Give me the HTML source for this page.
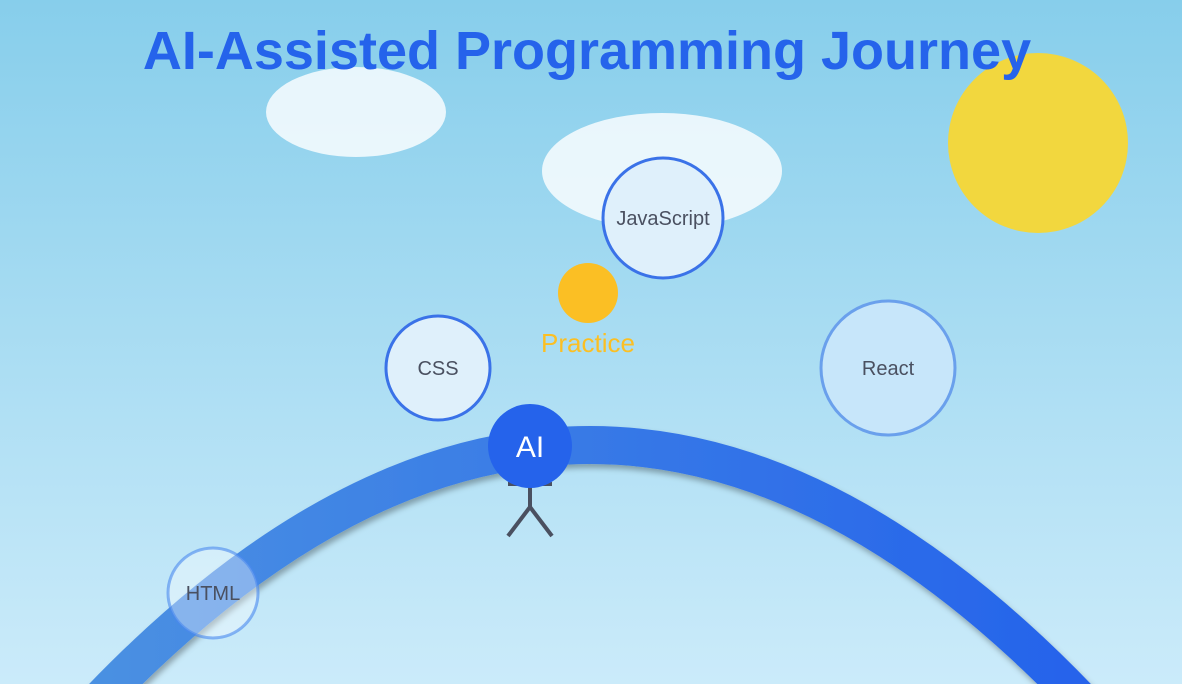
<!DOCTYPE html>
<html><head><style>
html,body{margin:0;padding:0}
body{width:1182px;height:684px;overflow:hidden;font-family:"Liberation Sans",sans-serif}
</style></head><body>
<svg width="1182" height="684" viewBox="0 0 1182 684" xmlns="http://www.w3.org/2000/svg">
<defs>
<linearGradient id="bg" x1="0" y1="0" x2="0" y2="1">
<stop offset="0" stop-color="#87ceeb"/><stop offset="1" stop-color="#cbebfa"/>
</linearGradient>
<linearGradient id="arc" x1="0" y1="0" x2="1" y2="0">
<stop offset="0" stop-color="#4a90e2"/><stop offset="1" stop-color="#2563eb"/>
</linearGradient>
<filter id="sh" x="-10%" y="-10%" width="120%" height="130%">
<feDropShadow dx="2" dy="4" stdDeviation="3" flood-color="#000" flood-opacity="0.3"/>
</filter>
</defs>
<rect width="1182" height="684" fill="url(#bg)"/>
<circle cx="1038" cy="143" r="90" fill="#f2d73e"/>
<ellipse cx="356" cy="112" rx="90" ry="45" fill="#fff" fill-opacity="0.8"/>
<ellipse cx="662" cy="171" rx="120" ry="58" fill="#fff" fill-opacity="0.8"/>
<text x="587" y="69" text-anchor="middle" font-size="54" font-weight="bold" fill="#2563eb">AI-Assisted Programming Journey</text>
<path d="M 100 700 Q 590 190 1080 700" stroke="url(#arc)" stroke-width="38" fill="none" filter="url(#sh)"/>
<g stroke="#4a5060" stroke-width="4" fill="none">
<line x1="530" y1="470" x2="530" y2="507"/>
<line x1="508" y1="484" x2="552" y2="484"/>
<line x1="530" y1="507" x2="508" y2="536"/>
<line x1="530" y1="507" x2="552" y2="536"/>
</g>
<circle cx="530" cy="446" r="42" fill="#2563eb"/>
<text x="530" y="457" text-anchor="middle" font-size="30" fill="#fff">AI</text>
<g font-size="20" fill="#4a5060" text-anchor="middle">
<circle cx="213" cy="593" r="45" fill="#ffffff" fill-opacity="0.35" stroke="#4a88ee" stroke-opacity="0.6" stroke-width="3"/>
<text x="213" y="600">HTML</text>
<circle cx="438" cy="368" r="52" fill="#dff0fb" stroke="#3a72e8" stroke-width="3"/>
<text x="438" y="375">CSS</text>
<circle cx="663" cy="218" r="60" fill="#dff0fb" stroke="#3a72e8" stroke-width="3"/>
<text x="663" y="225">JavaScript</text>
<circle cx="888" cy="368" r="67" fill="#c7e6fa" stroke="#6aa0ec" stroke-width="3"/>
<text x="888" y="375">React</text>
</g>
<circle cx="588" cy="293" r="30" fill="#fbbf24"/>
<text x="588" y="352" text-anchor="middle" font-size="26" fill="#fbbf24">Practice</text>
</svg>
</body></html>
